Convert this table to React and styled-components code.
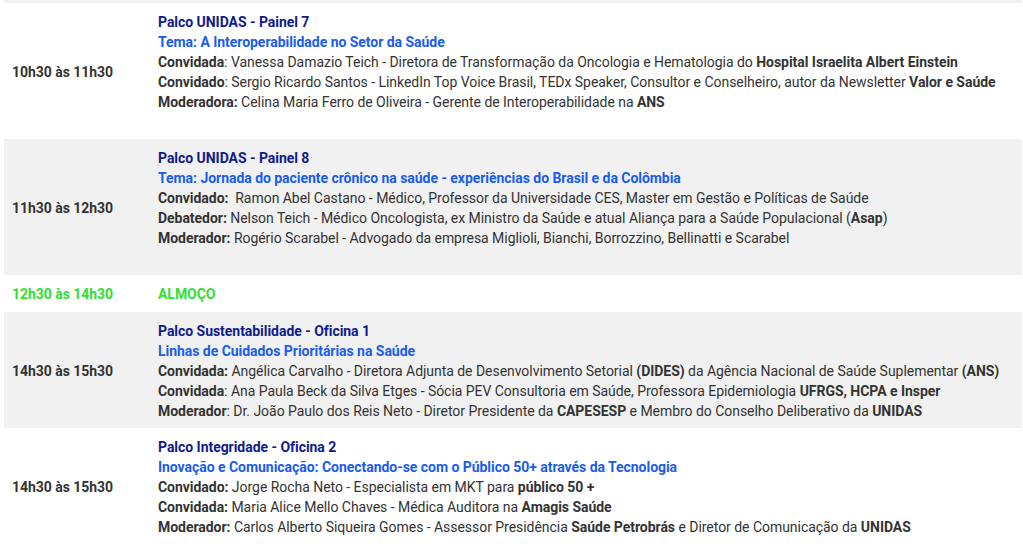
import React from "react";
import styled, { createGlobalStyle } from "styled-components";

const Global = createGlobalStyle`
  html, body { margin: 0; padding: 0; background: #fff; }
  body { font-family: Roboto, "Noto Sans", Arial, sans-serif; font-size: 14px; color: #333; letter-spacing: -0.04px; }
`;

const Table = styled.div`
  display: flex;
  flex-direction: column;
  padding: 0 1px 0 4px;
`;

const TopEdge = styled.div`
  height: 3px;
  background: #f1f1f1;
`;

const Row = styled.div`
  display: grid;
  grid-template-columns: 146px 1fr;
  background: ${(p) => (p.$shade ? "#f1f1f1" : "#ffffff")};
`;

const TimeCell = styled.div`
  display: flex;
  align-items: center;
  padding: ${(p) => p.$pad || "9px 8px 7px"};
  font-weight: 700;
  line-height: 20px;
  color: ${(p) => (p.$green ? "#2fe02f" : "#333")};
`;

const ContentCell = styled.div`
  padding: 9px 8px 0;
  line-height: 20px;
  padding-bottom: ${(p) => (p.$extra ? "27px" : p.$padB || "7px")};
`;

const Stage = styled.div`
  font-weight: 700;
  color: #0f1b8c;
`;

const Theme = styled.div`
  font-weight: 700;
  color: #1a5cf0;
`;

const Lunch = styled.div`
  font-weight: 700;
  color: #2fe02f;
`;

const Line = styled.div`
  white-space: nowrap;
`;

const B = styled.b`
  font-weight: 700;
`;

export default function App() {
  return (
    <>
      <Global />
      <Table>
        <TopEdge />
        <Row>
          <TimeCell>10h30 às 11h30</TimeCell>
          <ContentCell $extra>
            <Stage>Palco UNIDAS - Painel 7</Stage>
            <Theme>Tema: A Interoperabilidade no Setor da Saúde</Theme>
            <Line>
              <B>Convidada</B>: Vanessa Damazio Teich - Diretora de Transformação da Oncologia e Hematologia do{" "}
              <B>Hospital Israelita Albert Einstein</B>
            </Line>
            <Line>
              <B>Convidado</B>: Sergio Ricardo Santos - LinkedIn Top Voice Brasil, TEDx Speaker, Consultor e Conselheiro, autor da Newsletter{" "}
              <B>Valor e Saúde</B>
            </Line>
            <Line>
              <B>Moderadora:</B> Celina Maria Ferro de Oliveira - Gerente de Interoperabilidade na <B>ANS</B>
            </Line>
          </ContentCell>
        </Row>
        <Row $shade>
          <TimeCell>11h30 às 12h30</TimeCell>
          <ContentCell $extra>
            <Stage>Palco UNIDAS - Painel 8</Stage>
            <Theme>Tema: Jornada do paciente crônico na saúde - experiências do Brasil e da Colômbia</Theme>
            <Line>
              <B>Convidado:</B>&nbsp; Ramon Abel Castano - Médico, Professor da Universidade CES, Master em Gestão e Políticas de Saúde
            </Line>
            <Line>
              <B>Debatedor:</B> Nelson Teich - Médico Oncologista, ex Ministro da Saúde e atual Aliança para a Saúde Populacional (<B>Asap</B>)
            </Line>
            <Line>
              <B>Moderador:</B> Rogério Scarabel - Advogado da empresa Miglioli, Bianchi, Borrozzino, Bellinatti e Scarabel
            </Line>
          </ContentCell>
        </Row>
        <Row>
          <TimeCell $green $pad="9px 8px 8px">12h30 às 14h30</TimeCell>
          <ContentCell $padB="8px">
            <Lunch>ALMOÇO</Lunch>
          </ContentCell>
        </Row>
        <Row $shade>
          <TimeCell>14h30 às 15h30</TimeCell>
          <ContentCell>
            <Stage>Palco Sustentabilidade - Oficina 1</Stage>
            <Theme>Linhas de Cuidados Prioritárias na Saúde</Theme>
            <Line>
              <B>Convidada:</B> Angélica Carvalho - Diretora Adjunta de Desenvolvimento Setorial <B>(DIDES)</B> da Agência Nacional de Saúde Suplementar <B>(ANS)</B>
            </Line>
            <Line>
              <B>Convidada</B>: Ana Paula Beck da Silva Etges - Sócia PEV Consultoria em Saúde, Professora Epidemiologia <B>UFRGS, HCPA e Insper</B>
            </Line>
            <Line>
              <B>Moderador</B>: Dr. João Paulo dos Reis Neto - Diretor Presidente da <B>CAPESESP</B> e Membro do Conselho Deliberativo da <B>UNIDAS</B>
            </Line>
          </ContentCell>
        </Row>
        <Row>
          <TimeCell>14h30 às 15h30</TimeCell>
          <ContentCell>
            <Stage>Palco Integridade - Oficina 2</Stage>
            <Theme>Inovação e Comunicação: Conectando-se com o Público 50+ através da Tecnologia</Theme>
            <Line>
              <B>Convidado:</B> Jorge Rocha Neto - Especialista em MKT para <B>público 50 +</B>
            </Line>
            <Line>
              <B>Convidada:</B> Maria Alice Mello Chaves - Médica Auditora na <B>Amagis Saúde</B>
            </Line>
            <Line>
              <B>Moderador:</B> Carlos Alberto Siqueira Gomes - Assessor Presidência <B>Saúde Petrobrás</B> e Diretor de Comunicação da <B>UNIDAS</B>
            </Line>
          </ContentCell>
        </Row>
      </Table>
    </>
  );
}
